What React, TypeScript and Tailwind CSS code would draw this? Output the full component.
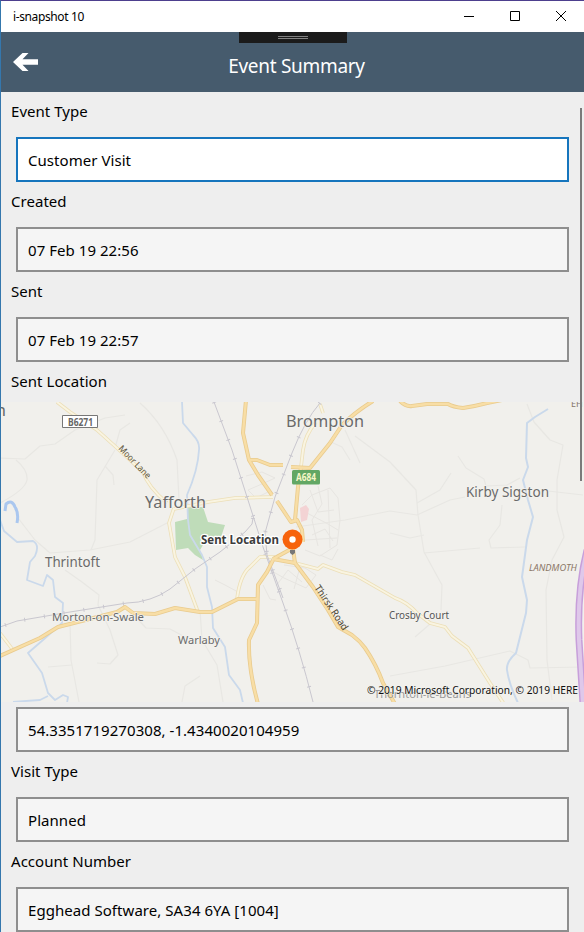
import clsx from 'clsx'

type FieldProps = {
  label?:  string
  value:   string
  active?: boolean
}

type Line = { d: string; w?: number }

type Place = {
  name:   string
  x:      number
  y:      number
  width:  number
  size:   number
  fill?:  string
  rotate?: number
}

const MAIN_ROADS: Line[] = [
  { d: 'M246 400L243 433L249 460L258 475L272 495' },
  { d: 'M249 460L257 460L270 465L283 465' },
  { d: 'M291 467L310 468L330 443L342 425Q355 412 373 401' },
  { d: 'M277 501L291 522L297 520L302 530L303 542' },
  { d: 'M301 467L298 487L295 520' },
  { d: 'M291 549L273 559' },
  { d: 'M273 559L295 563L293 549' },
  { d: 'M295 563L313 587L328 610L338 627L352 635Q360 641 365 648Q376 664 383 683L395 704' },
  { d: 'M273 560L267 572L258 585L257 623L249 640Q248 668 258 704' },
  { d: 'M0 656L40 638L58 627L117 612L125 607L133 613L155 614L175 608L200 612L212 612L238 599L257 599' },
  { d: 'M400 401Q406 407 412 406L427 404L448 404Q453 407 463 408Q476 406 487 403L502 400' },
]

const MINOR_ROADS: Line[] = [
  { d: 'M57 402L70 412L97 430L117 448L143 472Q148 487 167 503' },
  { d: 'M174 508L169 523L175 557L185 577L198 612' },
  { d: 'M174 509L208 502L235 498L273 497' },
  { d: 'M320 404L323 413' },
  { d: 'M316 422Q305 435 303 450L301 467' },
  { d: 'M295 563L318 569L323 565L342 572L355 575L395 598Q407 602 417 613L430 623L445 627L452 636L468 648L490 683L504 704' },
  { d: 'M275 557L260 557L250 567Q240 575 237 599' },
  { d: 'M0 633L13 650' },
]

const RIVERS: Line[] = [
  { d: 'M182 402L183 423L193 435Q200 442 199 450Q198 470 187 495L188 520L190 535L202 555L207 567L207 587L212 607L213 628L225 647L229 675L240 690L243 703' },
  { d: 'M0 520L4 531L17 542L33 541Q40 545 35 556L30 562L27 580L43 586L47 575L53 580L55 597L63 603L62 623L43 640L28 653L42 673L48 693L55 700L63 695L68 697L67 703' },
  { d: 'M13 702L40 700L48 696' },
  { d: 'M548 409L535 417L527 423L526 458L528 467L523 480L528 500L533 517L527 540L525 555L522 577L527 600L526 613L516 653Q506 662 507 670Q509 684 518 703', w: 2 },
]

const RAILWAYS = [
  'M214 402L232 450L263 547L283 603Q300 650 313 702',
  'M320 403Q305 420 292 453L275 497L265 533L267 555L283 598',
  'M253 518L252 524L245 532L220 552L195 569L170 589Q160 596 150 599Q138 603 127 603L70 612L17 621L0 627',
]

// barely visible lanes and field tracks
const LANES = [
  'M0 458L25 459L40 446L55 444L75 430L105 418L125 415',
  'M16 460Q28 470 27 480Q25 490 0 503',
  'M18 518L35 540L50 553L90 550L130 542L167 523',
  'M115 450L97 480L95 540L91 550',
  'M105 466L113 475L114 485',
  'M115 448L120 430L130 423',
  'M140 403Q165 425 177 460L179 500',
  'M65 570L82 582L99 595L98 605L110 630L118 655L110 664L97 663',
  'M70 622L71 660L79 702',
  'M48 667L72 665',
  'M133 614L146 628L170 629L187 638',
  'M200 610L202 640L217 665L223 702',
  'M200 676L185 686L182 702',
  'M345 430L360 463M355 436L390 462L416 490L418 515L424 552L442 585L441 610',
  'M331 442L342 447L350 460',
  'M296 527L345 520L390 511L417 515L450 500L465 497',
  'M417 503L440 490L451 473',
  'M458 456L466 468L484 479L486 486L507 485L520 478',
  'M502 505L500 525L489 540L491 548L525 547',
  'M424 553L480 548',
  'M527 404L534 422L550 440L563 445L557 480L557 510L564 537L552 560L546 590L547 660L552 700',
  'M548 491L583 495',
  'M390 676L445 666L510 651L528 660L530 668L583 667',
  'M415 637L430 624',
  'M390 533L410 538L424 535',
]

const TOWN = [
  'M246 476L262 472L275 478L262 484L248 490L256 498L268 492',
  'M302 505L312 495L330 488L338 498L340 520L337 545L320 556L305 550',
  'M310 490L318 512L334 510M305 512L328 524L338 530M312 535L325 529L333 541',
  'M318 486L322 504L312 520L318 546M328 490L330 548M305 540L337 538',
  'M270 570L284 578L306 588L316 575L305 568L284 565',
  'M276 586L288 570L302 582M294 589L300 567M320 555L332 560L338 549',
  'M263 585L270 599L276 600M238 592L225 585L215 580',
]

const PLACES: Place[] = [
  { name: 'Brompton',        x: 286, y: 427, width: 78,  size: 17 },
  { name: 'Yafforth',        x: 145, y: 508, width: 61,  size: 17 },
  { name: 'Kirby Sigston',   x: 466, y: 497, width: 83,  size: 13.5 },
  { name: 'Thrintoft',       x: 45,  y: 567, width: 55,  size: 13.5 },
  { name: 'Morton-on-Swale', x: 52,  y: 621, width: 92,  size: 11.5 },
  { name: 'Warlaby',         x: 178, y: 644, width: 42,  size: 11.5 },
  { name: 'Crosby Court',    x: 389, y: 619, width: 60,  size: 10, fill: '#555555' },
  { name: 'Moor Lane',       x: 118, y: 449, width: 42,  size: 9, fill: '#5d5640', rotate: 46 },
  { name: 'Thirsk Road',     x: 314, y: 588, width: 52,  size: 10, fill: '#4d4631', rotate: 56 },
]

export default function App() {
  return (
    <div className="flex h-[932px] w-[584px] flex-col overflow-hidden border-l border-t border-l-[#3477ad] border-t-[#4d3f8e] bg-[#eeeeee] font-['Noto_Sans','Open_Sans',sans-serif] text-black">
      <TitleBar />
      <Header />

      <main className="relative min-h-0 flex-1 overflow-hidden">
        <Field label="Event Type" value="Customer Visit" active />
        <Field label="Created" value="07 Feb 19 22:56" />
        <Field label="Sent" value="07 Feb 19 22:57" />
        <FieldLabel text="Sent Location" className="h-10" />
        <LocationMap />
        <div className="h-[5px]" />
        <Field value="54.3351719270308, -1.4340020104959" />
        <Field label="Visit Type" value="Planned" />
        <Field label="Account Number" value="Egghead Software, SA34 6YA [1004]" />

        {/* scroll thumb */}
        <div className="absolute right-[2px] top-4 h-[373px] w-[2px] bg-[#7a7a7a]" />
      </main>
    </div>
  )
}

function TitleBar() {
  return (
    <div className="flex h-[31px] shrink-0 items-center justify-between bg-white pl-3">
      <span className="text-[12px] leading-none tracking-[-0.38px]">i-snapshot 10</span>
      <div className="flex h-full">
        {['M18 15.5H28', 'M18.5 10.5H27.5V19.5H18.5Z', 'M18 10L28 20M28 10L18 20'].map(d => (
          <svg key={d} width="46" height="31" viewBox="0 0 46 31" fill="none" stroke="#000" className="shrink-0">
            <path d={d} />
          </svg>
        ))}
      </div>
    </div>
  )
}

function Header() {
  return (
    <header className="relative flex h-[60px] shrink-0 items-center bg-[#465b6d] text-white">
      <svg width="26" height="20" viewBox="0 0 26 20" className="ml-3 fill-white">
        <path d="M0 10L9.5 1H15.5L9.5 7.2H25V12.8H9.5L15.5 19H9.5Z" />
      </svg>
      <h1 className="absolute inset-x-0 top-[21px] pl-2 text-center text-[19px] leading-[26px] tracking-[-0.3px]">Event Summary</h1>

      {/* debug toolbar handle */}
      <div className="absolute left-[238px] top-0 flex h-[11px] w-[108px] items-center justify-center bg-[#1b1b1b]">
        <div className="h-[3px] w-[30px] border-y border-[#828282]" />
      </div>
    </header>
  )
}

function FieldLabel({ text, className }: { text: string; className?: string }) {
  return (
    <div className={clsx('pl-2.5 pt-[7px] text-[15px] leading-6 tracking-[0.04px]', className)}>{text}</div>
  )
}

function Field({ label, value, active }: FieldProps) {
  return (
    <div>
      {label && <FieldLabel text={label} className="h-[45px]" />}
      <div
        className={clsx(
          'ml-[15px] flex h-[45px] w-[553px] items-center border-2 pl-2.5 pt-px text-[15px] tracking-[0.05px]',
          active ? 'border-[#1675bd] bg-white' : 'border-[#8e8e8e] bg-[#f5f5f5]',
        )}
      >
        {value}
      </div>
    </div>
  )
}

function LocationMap() {
  return (
    <svg width="583" height="300" viewBox="1 402 583 300" fill="none" strokeLinejoin="round" className="block bg-[#f1f0ec]">
      <g stroke="#e8e7e3" strokeWidth="1.2">
        {LANES.map(d => <path key={d} d={d} />)}
      </g>
      <g stroke="#e7e5e1">
        {TOWN.map(d => <path key={d} d={d} />)}
      </g>

      <path d="M175 522L187 519L187 507L203 507L208 522L225 525L221 537L203 545L200 550L203 560L195 555L188 548L176 550Z" fill="#bfdcb9" />
      <path d="M300 508L306 505L309 509L307 520L301 522Z" fill="#f3d3d4" />

      {/* water */}
      <g stroke="#cad9eb" strokeWidth="1.8">
        {RIVERS.map(r => <path key={r.d} d={r.d} strokeWidth={r.w} />)}
      </g>
      <path d="M5 511L6 504Q12 499 15 507Q19 513 17 523" stroke="#aac7ef" strokeWidth="3" />

      {/* motorway */}
      <path d="M587 550Q577 590 579 640L583 704" stroke="#c79fda" strokeWidth="7" />
      <path d="M587 550Q577 590 579 640L583 704" stroke="#dfc8ea" strokeWidth="4" />

      <g stroke="#ecdfb8" strokeWidth="3.6">
        {MINOR_ROADS.map(r => <path key={r.d} d={r.d} />)}
      </g>
      <g stroke="#f9f4e1" strokeWidth="2">
        {MINOR_ROADS.map(r => <path key={r.d} d={r.d} />)}
      </g>

      <g stroke="#c9c7cf">
        {RAILWAYS.map(d => <path key={d} d={d} />)}
      </g>
      <g stroke="#c9c7cf" strokeWidth="4" strokeDasharray="1 19">
        {RAILWAYS.map(d => <path key={d} d={d} />)}
      </g>

      <g stroke="#e9cb8e" strokeWidth="4">
        {MAIN_ROADS.map(r => <path key={r.d} d={r.d} />)}
      </g>
      <g stroke="#f8dea6" strokeWidth="2.4">
        {MAIN_ROADS.map(r => <path key={r.d} d={r.d} />)}
      </g>

      {/* road shields */}
      <rect x="62.5" y="415.5" width="35" height="12" fill="#fff" stroke="#777" />
      <text x="68" y="425.5" fontSize="10" fontWeight="700" fill="#666" textLength="25" lengthAdjust="spacingAndGlyphs">B6271</text>
      <rect x="292" y="470" width="28" height="14.5" rx="1.5" fill="#62a764" />
      <text x="296" y="481" fontSize="10" fontWeight="700" fill="#f6f7c8" textLength="20" lengthAdjust="spacingAndGlyphs">A684</text>

      {PLACES.map(p => (
        <text
          key={p.name}
          x={p.x}
          y={p.y}
          fontSize={p.size}
          fill={p.fill ?? '#6a6a6a'}
          stroke={p.rotate ? 'none' : '#f4f3ef'}
          strokeWidth="1.5"
          paintOrder="stroke"
          textLength={p.width}
          lengthAdjust="spacingAndGlyphs"
          transform={p.rotate ? `rotate(${p.rotate} ${p.x} ${p.y})` : undefined}
        >
          {p.name}
        </text>
      ))}
      <text x="529" y="571" fontSize="9" fontStyle="italic" fill="#8b7767" textLength="48" lengthAdjust="spacingAndGlyphs">LANDMOTH</text>
      <text x="-4" y="416" fontSize="16" fill="#666">n</text>
      <text x="571" y="407" fontSize="9" fill="#85766a">EH</text>
      <text x="374" y="698" fontSize="11.5" fill="#999" textLength="97" lengthAdjust="spacingAndGlyphs">Thornton-le-Beans</text>

      {/* pin */}
      <path d="M290 550H295V553L292.5 555L290 553Z" fill="#777" />
      <circle cx="292.5" cy="539.5" r="10" fill="#f7630c" />
      <circle cx="292.5" cy="539.5" r="3.2" fill="#fff" />
      <text x="201" y="544" fontSize="11.5" fontWeight="700" fill="#3c3c3c" stroke="#fff" strokeWidth="2.5" paintOrder="stroke" textLength="78" lengthAdjust="spacingAndGlyphs">Sent Location</text>

      <text x="367" y="694" fontSize="10.5" fill="#111" stroke="#f4f3ef" strokeWidth="1" paintOrder="stroke" textLength="211" lengthAdjust="spacingAndGlyphs">© 2019 Microsoft Corporation, © 2019 HERE</text>
    </svg>
  )
}
